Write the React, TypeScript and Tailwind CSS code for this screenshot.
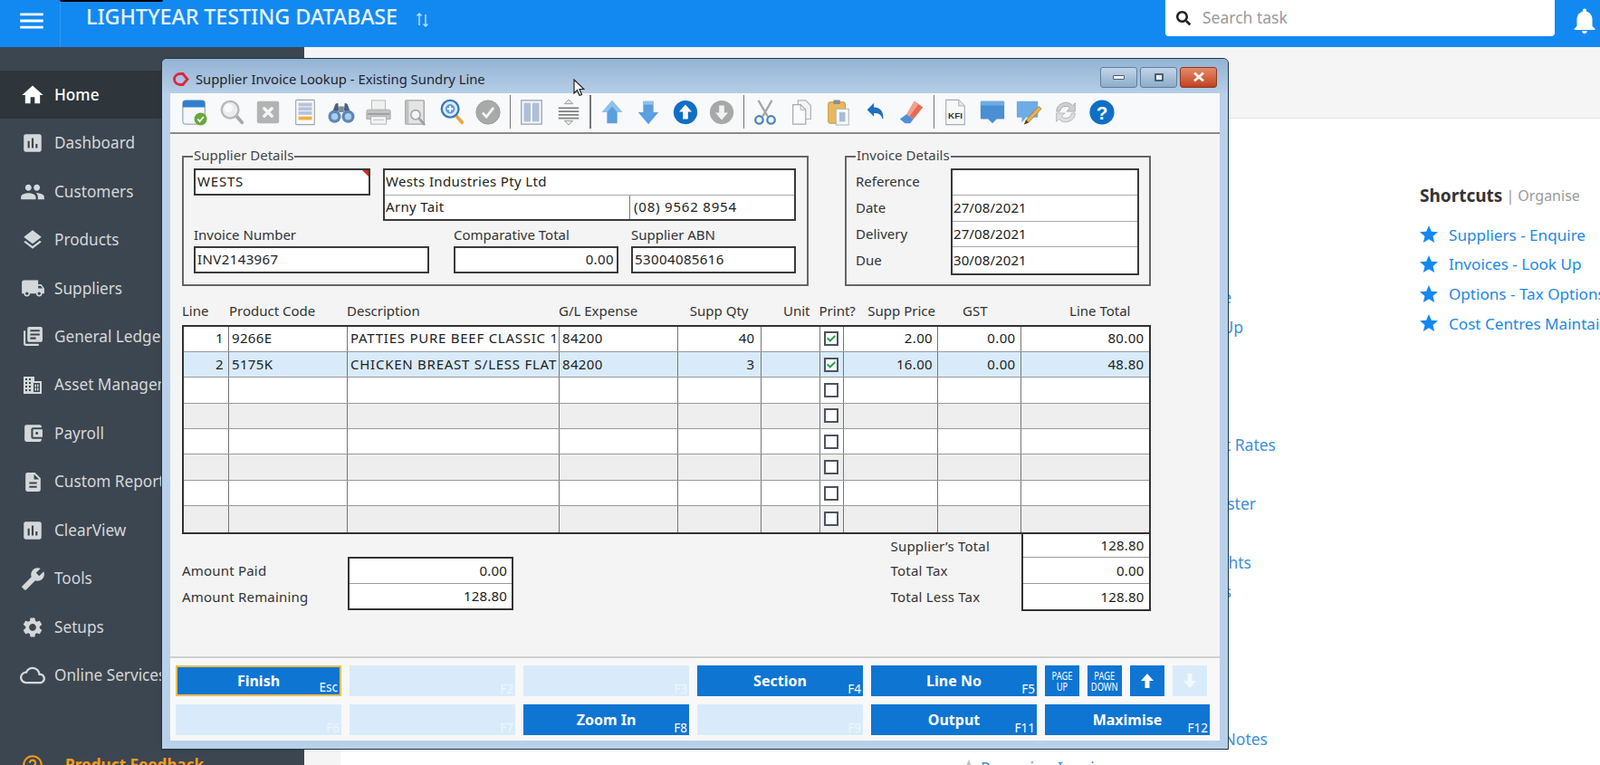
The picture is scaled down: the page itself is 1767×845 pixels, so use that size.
import type { ReactNode } from 'react'
import {
  MdHome, MdAssessment, MdPeople, MdLocalShipping, MdLibraryBooks, MdAccountBalanceWallet,
  MdDescription, MdBuild, MdSettings, MdCloudQueue, MdNotifications, MdStar, MdMenu, MdHelpOutline,
  MdLayers,
} from 'react-icons/md'
import { FaCheck, FaSearch } from 'react-icons/fa'

const navItems = [
  { label: 'Home', icon: <MdHome size={28} /> },
  { label: 'Dashboard', icon: <MdAssessment size={26} /> },
  { label: 'Customers', icon: <MdPeople size={28} /> },
  { label: 'Products', icon: <MdLayers size={26} /> },
  { label: 'Suppliers', icon: <MdLocalShipping size={27} /> },
  { label: 'General Ledger', icon: <MdLibraryBooks size={25} /> },
  { label: 'Asset Management', icon: <AssetIcon /> },
  { label: 'Payroll', icon: <MdAccountBalanceWallet size={25} /> },
  { label: 'Custom Reports', icon: <MdDescription size={25} /> },
  { label: 'ClearView', icon: <MdAssessment size={26} /> },
  { label: 'Tools', icon: <MdBuild size={27} className="-scale-x-100" /> },
  { label: 'Setups', icon: <MdSettings size={26} /> },
  { label: 'Online Services', icon: <MdCloudQueue size={28} /> },
]

// rows behind the lookup window, only their ends stick out on the right
const quickLinks = [
  { text: 'Customers - Enquire', width: 'w-[267px]' },
  { text: 'Invoices - Look Up', width: 'w-[280px]' },
  { text: '', width: 'w-[100px]' },
  { text: '', width: 'w-[100px]' },
  { text: '', width: 'w-[100px]' },
  { text: 'Discount Rates', width: 'w-[316px]' },
  { text: '', width: 'w-[100px]' },
  { text: 'Supplier Master', width: 'w-[294px]' },
  { text: '', width: 'w-[100px]' },
  { text: 'Access Rights', width: 'w-[289px]' },
  { text: 'Reports', width: 'w-[267px]' },
  { text: '', width: 'w-[100px]' },
  { text: '', width: 'w-[100px]' },
  { text: '', width: 'w-[100px]' },
  { text: '', width: 'w-[100px]' },
  { text: 'Credit Notes', width: 'w-[307px]' },
]

const shortcuts = ['Suppliers - Enquire', 'Invoices - Look Up', 'Options - Tax Options', 'Cost Centres Maintain']

const gridCols = 'grid grid-cols-[50px_131px_234px_131px_91.5px_65px_26px_104.5px_91.5px_141px]'

const gridRows = [
  { line: '1', code: '9266E', desc: 'PATTIES PURE BEEF CLASSIC 1', gl: '84200', qty: '40', checked: true, price: '2.00', gst: '0.00', total: '80.00', bg: 'bg-white' },
  { line: '2', code: '5175K', desc: 'CHICKEN BREAST S/LESS FLAT 1', gl: '84200', qty: '3', checked: true, price: '16.00', gst: '0.00', total: '48.80', bg: 'bg-[#d9ebfb]' },
  { bg: 'bg-white' },
  { bg: 'bg-[#eeeeee]' },
  { bg: 'bg-white' },
  { bg: 'bg-[#eeeeee]' },
  { bg: 'bg-white' },
  { bg: 'bg-[#eeeeee]' },
]

function AssetIcon() {
  return (
    <svg width="24" height="24" viewBox="0 0 24 24" fill="currentColor">
      <path d="M2 3h12v5h8v14H2z" />
      <g fill="#3c4650">
        <rect x="4" y="5" width="2" height="2" /><rect x="8" y="5" width="2" height="2" />
        <rect x="4" y="9" width="2" height="2" /><rect x="8" y="9" width="2" height="2" />
        <rect x="4" y="13" width="2" height="2" /><rect x="8" y="13" width="2" height="2" />
        <rect x="4" y="17" width="2" height="2" /><rect x="8" y="17" width="2" height="2" />
        <path d="M13 10h7v10h-7zM14.500 11.500v3h1.500v-3zM17 11.500v3h1.500v-3zM14.500 15.500v3h1.500v-3zM17 15.500v3h1.500v-3z" fillRule="evenodd" />
      </g>
    </svg>
  )
}

function Ico({ children }: { children: ReactNode }) {
  return (
    <div className="flex w-[40.5px] shrink-0 items-center justify-center">
      <svg width="30" height="30" viewBox="0 0 32 32">{children}</svg>
    </div>
  )
}

function ToolSep() {
  return <div className="mx-[3px] h-[37px] w-[1.5px] shrink-0 bg-[#777]" />
}

function Toolbar() {
  return (
    <div className="flex h-[43px] items-center bg-[#f8f9fa] pb-[2px] pl-[7px]">
      {/* calendar */}
      <Ico>
        <rect x="2" y="2" width="26" height="28" rx="3" fill="#f4f7fb" stroke="#7d8ea0" strokeWidth="1" />
        <path d="M2 5a3 3 0 0 1 3-3h20a3 3 0 0 1 3 3v5H2z" fill="#2f7fcf" />
        <circle cx="23" cy="24" r="7.500" fill="#6aa83a" />
        <path d="M19.500 24l2.500 2.800 4.500-5.500" fill="none" stroke="#fff" strokeWidth="1.800" />
      </Ico>
      {/* search, disabled */}
      <Ico>
        <path d="M20 19l8 9" stroke="#a8a8a8" strokeWidth="4" strokeLinecap="round" />
        <circle cx="14" cy="13" r="10" fill="#ececec" stroke="#b8b8b8" strokeWidth="2.500" />
        <circle cx="12" cy="11" r="5" fill="#fafafa" />
      </Ico>
      <Ico>
        <rect x="3" y="3" width="26" height="26" rx="2" fill="#b3b3b3" />
        <path d="M11.500 11.500l9 9M20.500 11.500l-9 9" stroke="#f6f6f6" strokeWidth="3.600" strokeLinecap="round" />
      </Ico>
      <Ico>
        <rect x="5" y="1.500" width="22" height="29" rx="1" fill="#f8f8f8" stroke="#9aa3b0" strokeWidth="1.200" />
        <rect x="8" y="5" width="16" height="4" fill="#b5c3dc" />
        <rect x="8" y="10" width="16" height="4" fill="#b5c3dc" />
        <rect x="8" y="15" width="16" height="4" fill="#b5c3dc" />
        <rect x="8" y="21" width="16" height="4" fill="#eeb042" />
      </Ico>
      {/* binoculars */}
      <Ico>
        <path d="M9 6l3-1 1 9-8 3zM23 6l-3-1-1 9 8 3z" fill="#4d5f7c" />
        <rect x="13" y="9" width="6" height="7" fill="#7d8ba0" />
        <circle cx="8" cy="21" r="7.500" fill="#5c85b8" />
        <circle cx="24" cy="21" r="7.500" fill="#5c85b8" />
        <circle cx="8" cy="21" r="4" fill="#a9cdee" />
        <circle cx="24" cy="21" r="4" fill="#a9cdee" />
      </Ico>
      {/* printer */}
      <Ico>
        <rect x="8" y="2" width="16" height="12" fill="#f0f0f0" stroke="#b5b5b5" />
        <path d="M4 13h24a2 2 0 0 1 2 2v9H2v-9a2 2 0 0 1 2-2z" fill="#c4c4c4" stroke="#a8a8a8" />
        <rect x="3" y="17" width="26" height="2" fill="#9d9d9d" />
        <rect x="7" y="21" width="18" height="9" fill="#f4f4f4" stroke="#b0b0b0" />
        <path d="M10 25h12" stroke="#bdbdbd" />
      </Ico>
      {/* print preview */}
      <Ico>
        <rect x="5" y="2" width="22" height="28" rx="1" fill="#e4e4e4" stroke="#a5a5a5" strokeWidth="1.500" />
        <rect x="5" y="2" width="4" height="28" fill="#c0c0c0" />
        <path d="M21 23l6 7" stroke="#a0a0a0" strokeWidth="3" strokeLinecap="round" />
        <circle cx="17" cy="19" r="5.500" fill="#f5f5f5" stroke="#a8a8a8" strokeWidth="1.800" />
      </Ico>
      {/* zoom in */}
      <Ico>
        <path d="M21 20l7 8" stroke="#eaa53a" strokeWidth="4" strokeLinecap="round" />
        <circle cx="14" cy="12" r="10" fill="#dcecf9" stroke="#3a78bf" strokeWidth="2.500" />
        <circle cx="14" cy="12" r="5.500" fill="#5d9ada" />
        <path d="M10.500 12h7M14 8.500v7" stroke="#fff" strokeWidth="2" />
      </Ico>
      <Ico>
        <circle cx="16" cy="16" r="14" fill="#a9a9a9" />
        <circle cx="16" cy="16" r="14" fill="none" stroke="#9a9a9a" />
        <path d="M9.500 16.500l4.500 5 8.500-11" fill="none" stroke="#f4f4f4" strokeWidth="3" />
      </Ico>
      <ToolSep />
      {/* split columns */}
      <Ico>
        <rect x="4" y="2" width="24" height="28" fill="#f3f5f8" stroke="#8b98aa" strokeWidth="1.200" />
        <rect x="7" y="5" width="8" height="22" fill="#b0bfd8" />
        <rect x="17" y="5" width="8" height="22" fill="#b0bfd8" />
      </Ico>
      {/* row height */}
      <Ico>
        <path d="M16 1l5 5H11z" fill="#e4e4e4" stroke="#9b9b9b" />
        <path d="M4 11h24M4 15h24M4 19h24M4 23h24" stroke="#7f7f7f" strokeWidth="1.800" />
        <path d="M16 31l5-5H11z" fill="#e4e4e4" stroke="#9b9b9b" />
      </Ico>
      <ToolSep />
      <Ico>
        <path d="M16 2L4 16h6v13h12V16h6z" fill="#5a9fe0" />
        <path d="M16 2L4 16h6L16 9l6 7h6z" fill="#8dc2ee" />
      </Ico>
      <Ico>
        <path d="M16 30L4 16h6V3h12v13h6z" fill="#5a9fe0" />
        <path d="M10 3h12v4H10z" fill="#8dc2ee" />
      </Ico>
      <Ico>
        <circle cx="16" cy="16" r="14" fill="#0f6fc6" />
        <path d="M16 7l-7.500 8.500h4.500V24h6v-8.500h4.500z" fill="#fff" />
      </Ico>
      <Ico>
        <circle cx="16" cy="16" r="14" fill="#a8a8a8" />
        <path d="M16 25l7.500-8.500H19V8h-6v8.500H8.500z" fill="#f2f2f2" />
      </Ico>
      <ToolSep />
      {/* scissors */}
      <Ico>
        <path d="M8 2l11 19M24 2L13 21" stroke="#a6a6a6" strokeWidth="2.400" />
        <circle cx="9" cy="25" r="4.500" fill="#f1f5fa" stroke="#4f82bd" strokeWidth="2.400" />
        <circle cx="23" cy="25" r="4.500" fill="#f1f5fa" stroke="#4f82bd" strokeWidth="2.400" />
      </Ico>
      {/* copy */}
      <Ico>
        <path d="M11 2h9l6 6v16H11z" fill="#f5f5f5" stroke="#b0b4b9" strokeWidth="1.300" />
        <path d="M5 7h9l6 6v17H5z" fill="#fafafa" stroke="#a4a9b0" strokeWidth="1.300" />
        <path d="M14 7v6h6" fill="none" stroke="#a4a9b0" />
      </Ico>
      {/* paste */}
      <Ico>
        <rect x="4" y="4" width="20" height="25" rx="2" fill="#e9b85d" stroke="#c2923e" />
        <rect x="10" y="1.500" width="8" height="5" rx="1" fill="#8a8f96" />
        <rect x="13" y="12" width="15" height="19" fill="#f8f8f8" stroke="#a7adb5" />
        <rect x="17" y="16" width="7" height="11" fill="#a9bcd6" />
      </Ico>
      {/* undo */}
      <Ico>
        <path d="M6 13l8-8v5c7 0 11 4 11 13l-1 1c-1-5-4-7-10-7v4z" fill="#1e6fbe" />
      </Ico>
      {/* eraser */}
      <Ico>
        <path d="M19 3l10 7-11 14-8-6z" fill="#e66a55" />
        <path d="M10 18l8 6-4 5H8l-6-5z" fill="#4d8fd6" />
        <path d="M19 3l5 3.500-11 14.500-3-3z" fill="#f2a08f" />
      </Ico>
      <ToolSep />
      {/* KFI page */}
      <Ico>
        <path d="M5 1.500h15l7 7V30.500H5z" fill="#f8f8f8" stroke="#a7adb5" strokeWidth="1.200" />
        <path d="M20 1.500v7h7" fill="#e3e6ea" stroke="#a7adb5" />
        <text x="16" y="23" textAnchor="middle" fontSize="10.500" fontWeight="700" fontFamily="Liberation Sans, sans-serif" fill="#333" textLength="17" lengthAdjust="spacingAndGlyphs">KFI</text>
      </Ico>
      {/* note */}
      <Ico>
        <path d="M3 3h26a1 1 0 0 1 1 1v19a1 1 0 0 1-1 1h-8l-5 5-5-5H3a1 1 0 0 1-1-1V4a1 1 0 0 1 1-1z" fill="#4a8fd3" />
        <path d="M3 3h26a1 1 0 0 1 1 1v4H2V4a1 1 0 0 1 1-1z" fill="#6fabe4" />
      </Ico>
      {/* note edit */}
      <Ico>
        <path d="M3 3h23a1 1 0 0 1 1 1v17a1 1 0 0 1-1 1H13l-5 6v-6H3a1 1 0 0 1-1-1V4a1 1 0 0 1 1-1z" fill="#6fabe4" />
        <path d="M28 9l3 3-15 16-5 2 2-5z" fill="#eab04a" stroke="#a8742a" strokeWidth=".8" />
        <path d="M11 30l2-5 3 3z" fill="#444" />
      </Ico>
      {/* refresh, disabled */}
      <Ico>
        <path d="M5 15a11 11 0 0 1 19-7l3-3v10H17l4-4a7 7 0 0 0-12 4z" fill="#cfcfcf" stroke="#ababab" />
        <path d="M27 17a11 11 0 0 1-19 7l-3 3V17h10l-4 4a7 7 0 0 0 12-4z" fill="#dedede" stroke="#b5b5b5" />
      </Ico>
      <Ico>
        <circle cx="16" cy="16" r="14.500" fill="#0f6fc6" />
        <text x="16" y="24" textAnchor="middle" fontSize="22" fontWeight="700" fontFamily="Liberation Sans, sans-serif" fill="#fff">?</text>
      </Ico>
    </div>
  )
}

function Box({ className, children }: { className: string; children?: ReactNode }) {
  return (
    <div className={`flex items-center border-2 border-[#3a3a3a] bg-white px-[2px] tracking-[0.4px] text-[#222] ${className}`}>
      {children}
    </div>
  )
}

function Group({ title, className, children }: { title: string; className: string; children: ReactNode }) {
  return (
    <div className={`relative h-[144px] shrink-0 border-2 border-[#666] pt-[12px] ${className}`}>
      <span className="absolute -top-[13px] left-[10px] bg-[#f4f4f4] px-[1px] leading-[20px] text-[#444]">{title}</span>
      {children}
    </div>
  )
}

function SupplierDetails() {
  return (
    <Group title="Supplier Details" className="w-[692px] pl-[11px]">
      <div className="flex h-[58px] items-start gap-[14px]">
        <Box className="relative h-[30px] w-[195px] pb-[1px] !tracking-[0.8px]">
          WESTS
          <span className="absolute right-0 top-0 h-0 w-0 border-l-[7px] border-t-[7px] border-l-transparent border-t-[#d8291c]" />
        </Box>
        <div className="w-[456px] border-2 border-[#3a3a3a] bg-white tracking-[0.35px] text-[#222]">
          <div className="flex h-[28px] items-center border-b border-[#aaa] px-[1px] pb-[1px]">Wests Industries Pty Ltd</div>
          <div className="flex h-[26px]">
            <div className="flex w-[271px] items-center border-r border-[#777] px-[1px]">Arny Tait</div>
            <div className="flex flex-1 items-center pl-[4px] tracking-[0.8px]">(08) 9562 8954</div>
          </div>
        </div>
      </div>
      <div className="mt-[6px] flex">
        <div className="w-[260px]">
          <div className="flex h-[22px] items-center pb-[3px] text-[#333]">Invoice Number</div>
          <Box className="h-[30px]">INV2143967</Box>
        </div>
        <div className="ml-[27px] w-[182px]">
          <div className="flex h-[22px] items-center pb-[3px] text-[#333]">Comparative Total</div>
          <Box className="h-[30px] justify-end pr-[3px]">0.00</Box>
        </div>
        <div className="ml-[14px] w-[182px]">
          <div className="flex h-[22px] items-center pb-[3px] text-[#333]">Supplier ABN</div>
          <Box className="h-[30px]">53004085616</Box>
        </div>
      </div>
    </Group>
  )
}

function InvoiceDetails() {
  const rows = [['Reference', ''], ['Date', '27/08/2021'], ['Delivery', '27/08/2021'], ['Due', '30/08/2021']]
  return (
    <Group title="Invoice Details" className="w-[338px] pl-[10px]">
      <div className="flex">
        <div className="w-[105px] text-[#333]">
          {rows.map(([label]) => <div key={label} className="flex h-[29px] items-center">{label}</div>)}
        </div>
        <div className="w-[208px] border-2 border-[#3a3a3a] bg-white tracking-[0.1px] text-[#222]">
          {rows.map(([label, value], i) => (
            <div key={label} className={`flex h-[28.500px] items-center pb-[1px] pl-[1px] ${i < 3 ? 'border-b border-[#aaa]' : ''}`}>{value}</div>
          ))}
        </div>
      </div>
    </Group>
  )
}

function Check({ on }: { on?: boolean }) {
  return (
    <div className="flex h-[16px] w-[16px] items-center justify-center border-2 border-[#4c5560] bg-white text-[#1da34a]">
      {on && <FaCheck size={10} />}
    </div>
  )
}

function LineGrid() {
  return (
    <>
      <div className={`${gridCols} mt-[16px] h-[27px] items-center whitespace-nowrap pb-[3px] text-[#333]`}>
        <div>Line</div>
        <div className="pl-[2px]">Product Code</div>
        <div className="pl-[1px]">Description</div>
        <div className="pl-[1px]">G/L Expense</div>
        <div className="pr-[12px] text-right">Supp Qty</div>
        <div className="pr-[9px] text-right">Unit</div>
        <div className="pl-[1px]">Print?</div>
        <div className="pr-[1px] text-right">Supp Price</div>
        <div className="pr-[35px] text-right">GST</div>
        <div className="pr-[18px] text-right">Line Total</div>
      </div>
      <div className="w-[1069.500px] border-2 border-[#333] tracking-[0.35px]">
        {gridRows.map((r, i) => (
          <div key={i} className={`${gridCols} h-[28.400px] text-[#222] ${r.bg} ${i < 7 ? 'border-b border-[#999]' : ''}`}>
            <div className="flex items-center justify-end border-r border-[#777] pb-[1px] pr-[5px]">{r.line}</div>
            <div className="flex items-center border-r border-[#777] pb-[1px] pl-[3px]">{r.code}</div>
            <div className="flex items-center overflow-hidden whitespace-nowrap border-r border-[#777] pb-[1px] pl-[3px] tracking-[0.75px]">{r.desc}</div>
            <div className="flex items-center border-r border-[#777] pb-[1px] pl-[3px]">{r.gl}</div>
            <div className="flex items-center justify-end border-r border-[#777] pb-[1px] pr-[6px]">{r.qty}</div>
            <div className="border-r border-[#777]" />
            <div className="flex items-center justify-center border-r border-[#777]"><Check on={r.checked} /></div>
            <div className="flex items-center justify-end border-r border-[#777] pb-[1px] pr-[5px]">{r.price}</div>
            <div className="flex items-center justify-end border-r border-[#777] pb-[1px] pr-[5px]">{r.gst}</div>
            <div className="flex items-center justify-end pb-[1px] pr-[5px]">{r.total}</div>
          </div>
        ))}
      </div>
    </>
  )
}

function Totals() {
  const right = [['Supplier\u2019s Total', '128.80', 'h-[26.500px]'], ['Total Tax', '0.00', 'h-[28.500px]'], ['Total Less Tax', '128.80', 'h-[28.500px]']]
  const left = [['Amount Paid', '0.00'], ['Amount Remaining', '128.80']]
  return (
    <div className="flex w-[1069.500px] items-start tracking-[0.2px]">
      <div className="mt-[25.500px] flex">
        <div className="w-[183px] text-[#333]">
          {left.map(([l]) => <div key={l} className="flex h-[29.500px] items-center">{l}</div>)}
        </div>
        <div className="w-[183px] border-2 border-[#333] bg-white text-[#222]">
          {left.map(([l, v], i) => (
            <div key={l} className={`flex h-[27.500px] items-center justify-end pr-[5px] ${i === 0 ? 'border-b border-[#999]' : ''}`}>{v}</div>
          ))}
        </div>
      </div>
      <div className="ml-auto flex">
        <div className="w-[144px] text-[#333]">
          {right.map(([l, , h]) => <div key={l} className={`flex items-center ${h}`}>{l}</div>)}
        </div>
        <div className="w-[143px] border-2 border-t-0 border-[#333] bg-white text-[#222]">
          {right.map(([l, v, h], i) => (
            <div key={l} className={`flex items-center justify-end pr-[5px] ${h} ${i < 2 ? 'border-b border-[#999]' : ''}`}>{v}</div>
          ))}
        </div>
      </div>
    </div>
  )
}

function FnButton({ label, fkey, off, focus, w = 'w-[183px]' }: { label?: string; fkey: string; off?: boolean; focus?: boolean; w?: string }) {
  return (
    <div className={`relative flex h-full shrink-0 items-center justify-center text-[16px] font-bold text-white ${w} ${off ? 'bg-[#d9ebfb]' : 'bg-[#0f75d2]'} ${focus ? 'border-2 border-[#eac04e]' : ''}`}>
      {label}
      <span className={`absolute bottom-[1px] right-[2px] text-[13.500px] font-normal leading-none ${off ? 'text-[#eef6fd]' : 'text-white'}`}>{fkey}</span>
    </div>
  )
}

function SmallButton({ off, children }: { off?: boolean; children: ReactNode }) {
  return (
    <div className={`flex h-full w-[38px] shrink-0 flex-col items-center justify-center text-white ${off ? 'bg-[#d9ebfb]' : 'bg-[#0f75d2]'}`}>
      {children}
    </div>
  )
}

function PageLabel({ top, bottom }: { top: string; bottom: string }) {
  return (
    <div className="scale-x-[0.72] text-center font-['Liberation_Sans',sans-serif] text-[13px] leading-[12px]">
      <div>{top}</div>
      <div>{bottom}</div>
    </div>
  )
}

function Footer() {
  return (
    <div className="h-[93px] border-t-2 border-[#d0d0d0] bg-[#f8f8f8] px-[6px] pt-[8px]">
      <div className="flex h-[34px] gap-[9px]">
        <FnButton label="Finish" fkey="Esc" focus />
        <FnButton fkey="F2" off />
        <FnButton fkey="F3" off />
        <FnButton label="Section" fkey="F4" />
        <FnButton label="Line No" fkey="F5" />
        <SmallButton><PageLabel top="PAGE" bottom="UP" /></SmallButton>
        <SmallButton><PageLabel top="PAGE" bottom="DOWN" /></SmallButton>
        <SmallButton>
          <svg width="16" height="18" viewBox="0 0 16 18" fill="currentColor"><path d="M8 1l7 8h-4.500v8h-5V9H1z" /></svg>
        </SmallButton>
        <SmallButton off>
          <svg width="16" height="18" viewBox="0 0 16 18" fill="#f2f8fe"><path d="M8 17l7-8h-4.500V1h-5v8H1z" /></svg>
        </SmallButton>
      </div>
      <div className="mt-[9px] flex h-[34px] gap-[9px]">
        <FnButton fkey="F6" off />
        <FnButton fkey="F7" off />
        <FnButton label="Zoom In" fkey="F8" />
        <FnButton fkey="F9" off />
        <FnButton label="Output" fkey="F11" />
        <FnButton label="Maximise" fkey="F12" w="w-[182px]" />
      </div>
    </div>
  )
}

function CaptionButton({ className, children }: { className: string; children: ReactNode }) {
  return (
    <div className={`flex h-[23px] w-[41px] items-center justify-center rounded-[3px] border border-[#5f7f9f] ${className}`}>
      {children}
    </div>
  )
}

function LookupWindow() {
  return (
    <div className="absolute left-[178px] top-[64px] flex h-[764px] w-[1179px] flex-col rounded-t-[6px] border-[1.500px] border-[#1d3a4a] bg-[#b8d0ea] px-[9px] pb-[9px] font-['Noto_Sans',sans-serif] text-[15px] shadow-sm">
      <div className="-mx-[9px] flex h-[38px] shrink-0 items-center rounded-t-[6px] bg-gradient-to-b from-[#93b3d4] to-[#b6cee6] pl-[12px] pr-[12px] pt-[6px]">
        <svg width="18" height="15" viewBox="0 0 18 15" className="shrink-0">
          <path d="M8 1.500C4.500 1.500 1.500 4 1.500 7.500s3 6 6.500 6h3l5-6-5-6z" fill="none" stroke="#e0243c" strokeWidth="2.800" />
        </svg>
        <span className="ml-[7px] flex-1 text-[14.800px] text-[#1c2733]">Supplier Invoice Lookup - Existing Sundry Line</span>
        <div className="flex gap-[3px] pb-[4px]">
          <CaptionButton className="bg-gradient-to-b from-[#c2d5e9] to-[#8eacca]">
            <span className="h-[5px] w-[13px] rounded-[1px] border border-[#4a5e74] bg-[#f1f4f8]" />
          </CaptionButton>
          <CaptionButton className="bg-gradient-to-b from-[#c2d5e9] to-[#8eacca]">
            <span className="h-[9px] w-[10px] rounded-[1px] border-2 border-[#4a5e74] bg-[#e8eef5]" />
          </CaptionButton>
          <CaptionButton className="border-[#8a3a20] bg-gradient-to-b from-[#e58a68] to-[#c1401d]">
            <svg width="14" height="12" viewBox="0 0 14 12"><path d="M2 1.500l10 9M12 1.500l-10 9" stroke="#f6f2ee" strokeWidth="3" /></svg>
          </CaptionButton>
        </div>
      </div>
      <div className="flex min-h-0 flex-1 flex-col bg-[#f4f4f4]">
        <Toolbar />
        <div className="h-[1.500px] shrink-0 bg-[#8a8a8a]" />
        <div className="min-h-0 flex-1 pl-[13px] pt-[24px]">
          <div className="flex gap-[40px]">
            <SupplierDetails />
            <InvoiceDetails />
          </div>
          <LineGrid />
          <Totals />
        </div>
        <Footer />
      </div>
      {/* mouse pointer */}
      <svg width="13" height="20" viewBox="0 0 13 20" className="absolute left-[454px] top-[22px]">
        <path d="M1 1v15l3.500-3.500 2.500 6 2.500-1-2.500-6H12z" fill="#fff" stroke="#222" strokeWidth="1.200" />
      </svg>
    </div>
  )
}

export default function App() {
  return (
    <div className="relative h-[845px] w-[1767px] overflow-hidden bg-white font-['Roboto',sans-serif]">
      <header className="relative flex h-[52px] items-center bg-[#1289f0] text-white">
        <span className="absolute left-[66px] top-0 h-[2px] w-[114px] rounded-b-sm bg-black" />
        <div className="flex h-full w-[67px] items-center justify-center border-r border-[#2a97f3] pb-[6px] pl-[3px]">
          <MdMenu size={34} />
        </div>
        <h1 className="mb-[14px] ml-[28px] text-[23.400px] font-medium tracking-[-0.1px] text-[#e7f3fe]">LIGHTYEAR TESTING DATABASE</h1>
        <svg width="15" height="18" viewBox="0 0 15 18" className="mb-[8px] ml-[20px]" fill="none" stroke="#b9dcfb" strokeWidth="1.500">
          <path d="M4 15V2M1.500 4.500L4 2l2.500 2.500M11 3v13M8.500 13.500L11 16l2.500-2.500" />
        </svg>
        <div className="mb-[12px] ml-auto flex h-[40px] w-[430px] items-center rounded-b-[4px] bg-white pl-[12px]">
          <FaSearch size={16} className="text-[#222]" />
          <span className="mb-[1px] ml-[13px] text-[17.500px] text-[#9a9a9a]">Search task</span>
        </div>
        <div className="ml-[16px] w-[34px] shrink-0 pb-[6px]">
          <MdNotifications size={34} />
        </div>
      </header>

      <div className="flex h-[793px]">
        <aside className="w-[336px] shrink-0 bg-[#3c4650] pt-[26px] text-[17.200px] text-[#d5d8da]">
          {navItems.map((item, i) => (
            <div key={item.label} className={`flex h-[53.450px] items-center whitespace-nowrap ${i === 0 ? 'bg-[#2e353b] font-medium text-white' : ''}`}>
              <div className="flex w-[60px] shrink-0 items-center justify-center pl-[12px]">{item.icon}</div>
              <span>{item.label}</span>
            </div>
          ))}
          <div className="mt-[59px] flex items-center whitespace-nowrap font-bold text-[#f39c1f]">
            <div className="flex w-[60px] shrink-0 justify-center pl-[12px]"><MdHelpOutline size={26} /></div>
            <span className="ml-[12px]">Product Feedback</span>
          </div>
        </aside>

        <main className="flex min-w-0 flex-1 flex-col">
          <div className="h-[79px] shrink-0 border-b border-[#e3e3e3] bg-[#f5f5f5]" />
          <div className="flex min-h-0 flex-1">
            <div className="w-[40px] shrink-0 bg-[#f5f5f5]" />
            <div className="relative min-w-0 flex-1 overflow-hidden">
              <div className="flex h-full whitespace-nowrap text-[17.500px] text-[#3f8fdb]">
                <div className="ml-[683px] w-[509px] shrink-0 pt-[181px]">
                  {quickLinks.map((l, i) => (
                    <div key={i} className="flex h-[32.500px] items-center">
                      <MdStar size={22} className="text-[#9a9a9a]" />
                      <div className={`ml-[12px] text-right ${l.width}`}>{l.text}</div>
                    </div>
                  ))}
                  <div className="flex h-[32.500px] items-center">
                    <MdStar size={22} className="text-[#c4c4c4]" />
                    <span className="ml-[2px]">Recurring Invoices</span>
                  </div>
                </div>
                <div className="pt-[70px] text-[17.100px] text-[#1e88e5]">
                  <div className="flex h-[30px] items-center">
                    <span className="text-[19px] font-bold text-[#333]">Shortcuts</span>
                    <span className="ml-[4px] text-[16px] text-[#9a9a9a]">| Organise</span>
                  </div>
                  <div className="mt-[12px]">
                    {shortcuts.map((s) => (
                      <div key={s} className="flex h-[32.700px] items-center">
                        <MdStar size={24} className="-ml-[2px] text-[#1289f0]" />
                        <span className="ml-[10px]">{s}</span>
                      </div>
                    ))}
                  </div>
                </div>
              </div>
            </div>
          </div>
        </main>
      </div>

      <LookupWindow />
    </div>
  )
}
